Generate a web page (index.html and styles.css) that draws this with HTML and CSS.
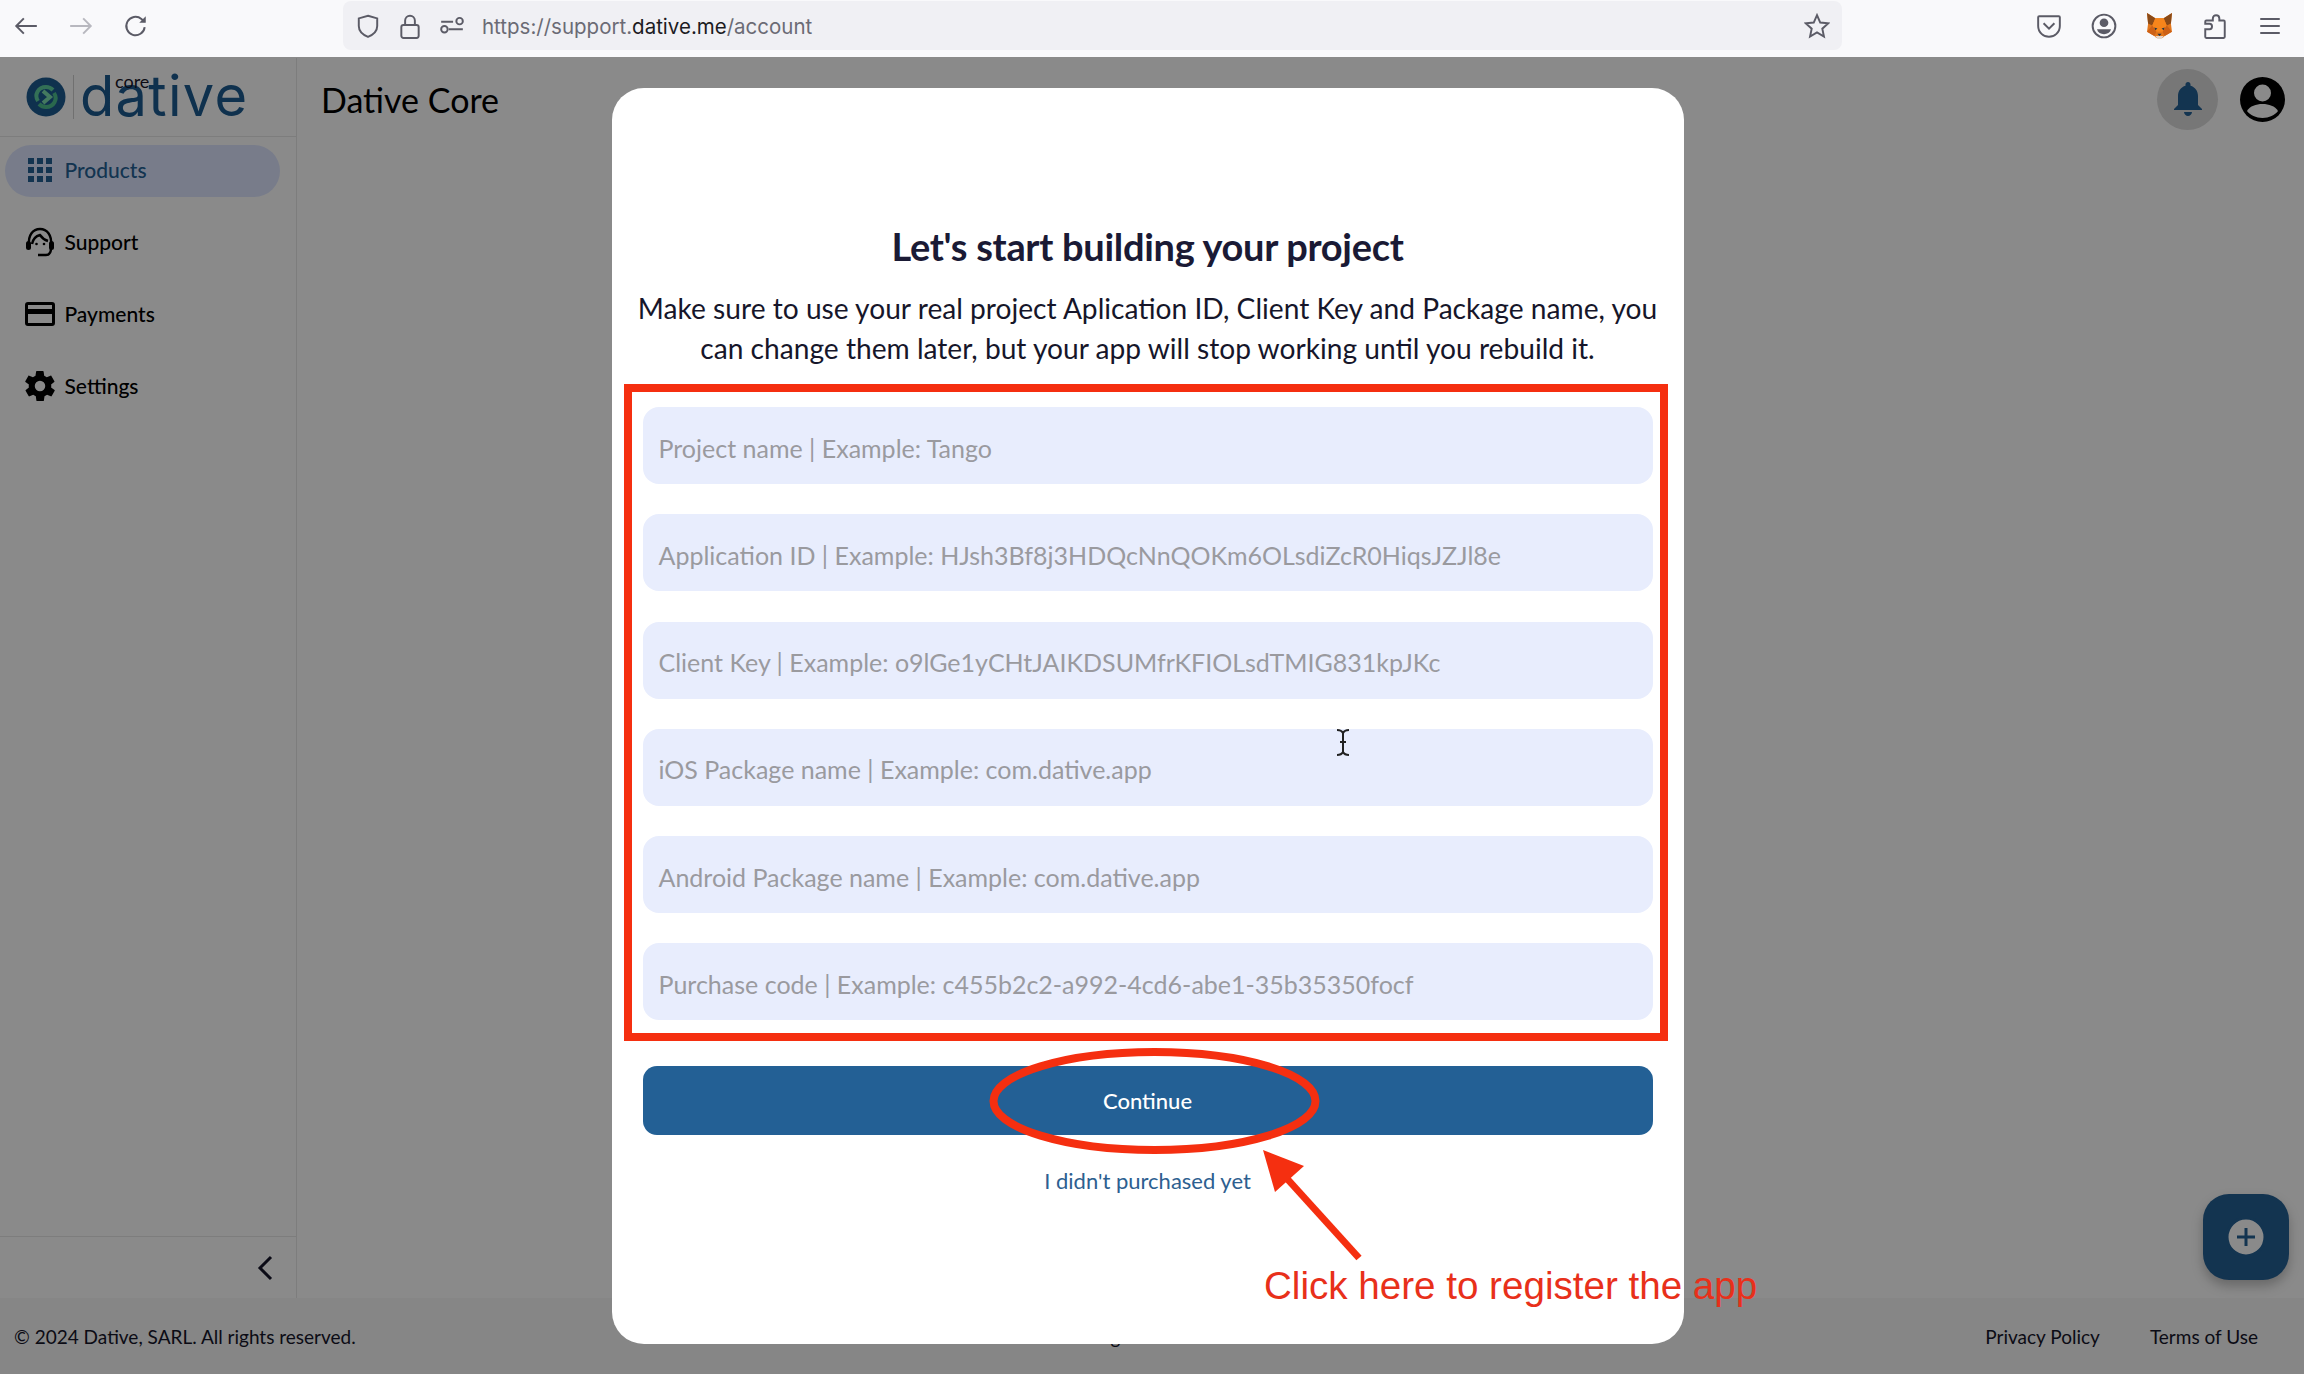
FILE: index.html
```html
<!DOCTYPE html>
<html lang="en">
<head>
  <meta charset="UTF-8" />
  <title>Dative Core</title>
  <link rel="stylesheet" href="styles.css">
</head>
<body>
  <div class="toolbar">
    <div class="tb-nav">
      <svg class="tb-icon" viewBox="0 0 24 24"><path d="M22 12H3M10 5l-7 7 7 7"/></svg>
      <svg class="tb-icon faded" viewBox="0 0 24 24"><path d="M2 12h19M14 5l7 7-7 7"/></svg>
      <svg class="tb-icon" viewBox="0 0 24 24"><path d="M20 13a8.5 8.5 0 1 1-3-7.5L20 8"/><path class="solid" d="M21 3v6h-6z"/></svg>
    </div>
    <div class="urlbar">
      <svg class="tb-icon" viewBox="0 0 24 24"><path d="M12 2.5l8.5 2.5v7c0 5-3.5 8-8.5 10-5-2-8.5-5-8.5-10V5z"/></svg>
      <svg class="tb-icon" viewBox="0 0 24 24"><rect x="4" y="11" width="16" height="12" rx="2"/><path d="M7.500 11V7a4.500 4.500 0 0 1 9 0v4"/></svg>
      <svg class="tb-icon" viewBox="0 0 24 24"><path d="M2 8h11M2 8M9 15h13"/><circle cx="19" cy="7.500" r="3"/><circle cx="5" cy="15" r="3"/></svg>
      <span class="url">https://support.<b>dative.me</b>/account</span>
      <svg class="tb-icon star" viewBox="0 0 24 24"><path d="M12 2l3 6.800 7.300.8-5.400 4.900 1.500 7.200-6.400-3.700-6.400 3.700 1.500-7.200L1.700 9.600 9 8.800z"/></svg>
    </div>
    <div class="tb-tools">
      <svg class="tb-icon" viewBox="0 0 24 24"><path d="M3 3h18a1 1 0 0 1 1 1v8c0 6-5 10-10 10S2 18 2 12V4a1 1 0 0 1 1-1z"/><path d="M7 9.500l5 5 5-5"/></svg>
      <svg class="tb-icon" viewBox="0 0 24 24"><circle cx="12" cy="12" r="10.500"/><circle class="solid" cx="12" cy="9" r="4"/><path class="solid" d="M5.500 15h13c-.800 3-3.500 4.500-6.500 4.500S6.300 18 5.500 15z"/></svg>
      <svg class="fox" viewBox="0 0 26 26">
        <path fill="#e2761b" d="M1 1l8 5h8l8-5-1 10 1 8-7 4-2 2h-6l-2-2-7-4 1-8z"/>
        <path fill="#8a4a17" d="M1 1l8 5-3 7-4-2zM25 1l-8 5 3 7 4-2z"/>
        <path fill="#f6851b" d="M6 13l3-7h8l3 7-4 6h-6z"/>
        <path fill="#cd6116" d="M1 19l5-6 4 6-2 4zM25 19l-5-6-4 6 2 4z"/>
        <path fill="#e4d5c8" d="M9 23h8l-2 3h-4z"/>
        <path fill="#233447" d="M11 21h4l-2 2zM8 15l3 1-2 1.500zM18 15l-3 1 2 1.500z"/>
      </svg>
      <svg class="tb-icon" viewBox="0 0 24 24"><path d="M4 23a1 1 0 0 1-1-1v-7h4c3 0 3-5 0-5H3V8a1 1 0 0 1 1-1h6V5c0-4 6-4 6 0v2h4a1 1 0 0 1 1 1v14a1 1 0 0 1-1 1z"/></svg>
      <svg class="tb-icon" viewBox="0 0 24 24"><path d="M3 5.500h18M3 12h18M3 18.500h18"/></svg>
    </div>
  </div>

  <div class="app">
    <div class="app-row">
      <aside class="sidebar">
        <div class="logo">
          <svg class="logo-mark" viewBox="0 0 40 40">
            <circle cx="20" cy="20" r="19.500" fill="#1d5c90"/>
            <path class="swirl-a" d="M12 24c-4-6 0-14 8-14 3 0 5 1 7 3"/>
            <path class="swirl-b" d="M28 16c4 6 0 14-8 14-3 0-5-1-7-3"/>
            <path class="swirl-c" d="M17 14l7 6-7 6"/>
          </svg>
          <div class="logo-word">
            <span class="logo-core">core</span>
            <span class="logo-name">dative</span>
          </div>
        </div>
        <nav class="nav">
          <a class="nav-item active">
            <svg class="nav-icon" viewBox="-2 -2 30 30"><path d="M1 1h6v6H1zM10 1h6v6h-6zM19 1h6v6h-6zM1 10h6v6H1zM10 10h6v6h-6zM19 10h6v6h-6zM1 19h6v6H1zM10 19h6v6h-6zM19 19h6v6h-6z"/></svg>
            Products
          </a>
          <a class="nav-item">
            <svg class="nav-icon outline" viewBox="0 0 30 30"><path d="M4 18C3 8 8 2 15 2s12 6 11 16"/><path d="M7 17c1-5 4-8 8-9 2 3 5 5 8 6"/><path d="M26 21c0 4-1 7-5 7h-8"/><rect class="fill" x="1" y="14" width="5" height="9" rx="2.500"/><rect class="fill" x="24" y="14" width="5" height="9" rx="2.500"/><circle class="fill" cx="11.500" cy="17" r="1.300"/><circle class="fill" cx="19" cy="17" r="1.300"/></svg>
            Support
          </a>
          <a class="nav-item">
            <svg class="nav-icon" viewBox="0 -3 30 30"><path d="M3 0h24a3 3 0 0 1 3 3v18a3 3 0 0 1-3 3H3a3 3 0 0 1-3-3V3a3 3 0 0 1 3-3zm0 3v4h24V3zm0 9v9h24v-9z"/></svg>
            Payments
          </a>
          <a class="nav-item">
            <svg class="nav-icon" viewBox="2 2 20 20"><path d="M19.400 13c.1-.3.1-.7.1-1s0-.7-.1-1l2.100-1.600c.2-.2.2-.4.1-.6l-2-3.500c-.1-.2-.4-.3-.6-.2l-2.500 1c-.5-.4-1.100-.7-1.700-1l-.4-2.700c0-.2-.2-.4-.5-.4h-4c-.3 0-.5.2-.5.400l-.4 2.700c-.6.300-1.200.6-1.700 1l-2.500-1c-.2-.1-.5 0-.6.200l-2 3.500c-.1.2-.1.400.1.600L4.600 11c-.1.300-.1.700-.1 1s0 .7.100 1l-2.100 1.600c-.2.200-.2.400-.1.600l2 3.500c.1.200.4.300.6.200l2.500-1c.5.400 1.100.7 1.700 1l.4 2.700c0 .2.2.4.5.4h4c.3 0 .5-.2.5-.4l.4-2.700c.6-.3 1.200-.6 1.700-1l2.500 1c.2.100.5 0 .6-.2l2-3.500c.1-.2.1-.4-.1-.6zM12 15.500a3.500 3.500 0 1 1 0-7 3.500 3.500 0 0 1 0 7z"/></svg>
            Settings
          </a>
        </nav>
        <div class="collapse">
          <svg class="chevron" viewBox="0 0 16 26"><path d="M14 2L3 13l11 11"/></svg>
        </div>
      </aside>

      <main class="content">
        <header class="topbar">
          <h1>Dative Core</h1>
          <div class="top-actions">
            <div class="bell-wrap">
              <svg class="bell" viewBox="0 0 30 36"><path d="M15 0c1.500 0 2.500 1 2.500 2.500v1.300C22 5 25 9 25 14v9l4 4v1H1v-1l4-4v-9C5 9 8 5 12.500 3.800V2.500C12.500 1 13.500 0 15 0zM11 30h8c0 2-2 4-4 4s-4-2-4-4z"/></svg>
            </div>
            <svg class="avatar" viewBox="0 0 45 45"><circle cx="22.500" cy="22.500" r="22.500" fill="#000"/><circle class="avatar-cut" cx="22.500" cy="16" r="8.500"/><path class="avatar-cut" d="M7 34c3-5 9-7 15.500-7S35 29 38 34c-3 4-9 7-15.500 7S10 38 7 34z"/></svg>
          </div>
        </header>
        <button class="fab">
          <svg viewBox="0 0 38 38"><circle cx="19" cy="19" r="19" fill="#fff"/><path d="M19 10v18M10 19h18"/></svg>
        </button>
      </main>
    </div>

    <footer class="footer">
      <span>&copy; 2024 Dative, SARL. All rights reserved.</span>
      <span class="footer-mid">g</span>
      <div class="footer-links">
        <a>Privacy Policy</a>
        <a>Terms of Use</a>
      </div>
    </footer>

    <div class="overlay">
      <div class="modal">
        <h2>Let's start building your project</h2>
        <p class="intro">Make sure to use your real project Aplication ID, Client Key and Package name, you<br>can change them later, but your app will stop working until you rebuild it.</p>
        <div class="fields">
          <div class="field">Project name | Example: Tango</div>
          <div class="field">Application ID | Example: HJsh3Bf8j3HDQcNnQOKm6OLsdiZcR0HiqsJZJl8e</div>
          <div class="field">Client Key | Example: o9lGe1yCHtJAIKDSUMfrKFIOLsdTMIG831kpJKc</div>
          <div class="field">iOS Package name | Example: com.dative.app</div>
          <div class="field">Android Package name | Example: com.dative.app</div>
          <div class="field">Purchase code | Example: c455b2c2-a992-4cd6-abe1-35b35350focf</div>
        </div>
        <button class="btn-continue">Continue</button>
        <a class="not-purchased">I didn't purchased yet</a>
      </div>
    </div>
  </div>

  <!-- red marks drawn on top of the screenshot -->
  <svg class="marks" viewBox="0 0 2304 1374">
    <rect class="mark-line" x="628" y="388" width="1036" height="649"/>
    <ellipse class="mark-line" cx="1154.500" cy="1101" rx="161" ry="49"/>
    <path class="mark-line thin" d="M1359 1258l-78-86"/>
    <path class="mark-fill" d="M1263 1150l41 16-29 26z"/>
    <text class="mark-text" x="1264" y="1299">Click here to register the app</text>
    <path class="cursor" d="M1337 730c3 0 5 1 6 3 1-2 3-3 6-3M1343 733v19M1337 755c3 0 5-1 6-3 1 2 3 3 6 3M1340 742h6"/>
  </svg>
</body>
</html>
```

FILE: styles.css
```css
* {
  box-sizing: border-box;
  margin: 0;
  padding: 0;
}

body {
  width: 2304px;
  height: 1374px;
  overflow: hidden;
  position: relative;
  background: #fff;
  font-family: 'Lato', sans-serif;
  color: #16162a;
}

/* browser bar */
.toolbar {
  height: 58px;
  display: flex;
  background: #f9f9fb;
  border-bottom: 1px solid #8a8a8a;
  padding: 1px 0 0 0;
}

.tb-icon {
  width: 26px;
  height: 26px;
  fill: none;
  stroke: #5b5b66;
  stroke-width: 1.8;
  flex-shrink: 0;
}

.tb-icon .solid {
  fill: #5b5b66;
  stroke: none;
}

.tb-icon.faded {
  stroke: #b8b8bf;
}

.tb-nav {
  width: 343px;
  display: flex;
  align-items: center;
  gap: 29px;
  padding: 0 0 7px 13px;
}

.urlbar {
  width: 1499px;
  height: 49px;
  background: #f0f0f4;
  border-radius: 8px;
  display: flex;
  align-items: center;
  gap: 16px;
  padding: 0 12px;
}

.url {
  font-family: 'Inter', sans-serif;
  font-size: 20.500px;
  color: #6b6b75;
  flex: 1;
  padding: 2px 0 0 1px;
}

.url b {
  font-weight: 400;
  color: #1c1b22;
}

.tb-tools {
  flex: 1;
  display: flex;
  align-items: center;
  gap: 29px;
  padding: 0 0 7px 194px;
}

.fox {
  width: 27px;
  height: 27px;
  flex-shrink: 0;
}

/* app under the modal */
.app {
  height: 1316px;
  position: relative;
  display: flex;
  flex-direction: column;
}

.app-row {
  flex: 1;
  display: flex;
}

.sidebar {
  width: 297px;
  border-right: 1px solid #e8e8e8;
  display: flex;
  flex-direction: column;
}

.logo {
  height: 79px;
  border-bottom: 1px solid #e8e8e8;
  display: flex;
  align-items: center;
  padding: 0 0 0 26px;
}

.logo-mark {
  width: 40px;
  height: 40px;
}

.swirl-a,
.swirl-b,
.swirl-c {
  fill: none;
  stroke-width: 4;
}

.swirl-a {
  stroke: #5fd0a0;
}

.swirl-b {
  stroke: #4fc08f;
}

.swirl-c {
  stroke: #7fe0b0;
}

.logo-word {
  position: relative;
  margin-left: 7px;
  padding-left: 6px;
  border-left: 1px solid #d0d0d0;
  height: 44px;
  display: flex;
  align-items: flex-end;
}

.logo-name {
  font-family: 'Inter', sans-serif;
  font-size: 56px;
  line-height: 46px;
  letter-spacing: 1.300px;
  color: #1d5c90;
}

.logo-core {
  position: absolute;
  left: 41px;
  top: -3px;
  font-size: 18px;
  line-height: 18px;
  color: #16162a;
}

.nav {
  flex: 1;
  display: flex;
  flex-direction: column;
  gap: 20px;
  padding: 8px 16px 0 5px;
}

.nav-item {
  height: 52px;
  border-radius: 26px;
  display: flex;
  align-items: center;
  gap: 10px;
  padding: 0 0 3px 19.500px;
  font-size: 21px;
  font-weight: 500;
  color: #000;
}

.nav-item.active {
  background: #dee6ff;
  color: #236095;
}

.nav-icon {
  width: 30px;
  height: 30px;
  fill: currentColor;
}

.nav-icon.outline {
  fill: none;
  stroke: currentColor;
  stroke-width: 2.400;
}

.nav-icon .fill {
  fill: currentColor;
  stroke: none;
}

.collapse {
  height: 62px;
  border-top: 1px solid #e8e8e8;
  display: flex;
  align-items: center;
  justify-content: flex-end;
  padding-right: 23px;
}

.chevron {
  width: 16px;
  height: 26px;
  fill: none;
  stroke: #16162a;
  stroke-width: 3;
}

.content {
  flex: 1;
  position: relative;
}

.topbar {
  display: flex;
  justify-content: space-between;
  align-items: center;
  padding: 11px 19px 0 24px;
}

.topbar h1 {
  font-size: 34px;
  font-weight: 400;
  color: #000;
}

.top-actions {
  display: flex;
  align-items: center;
  gap: 22px;
}

.bell-wrap {
  width: 61px;
  height: 61px;
  border-radius: 50%;
  background: #dcdcdc;
  display: flex;
  align-items: center;
  justify-content: center;
}

.bell {
  width: 30px;
  height: 36px;
  fill: #236095;
}

.avatar {
  width: 45px;
  height: 45px;
}

.avatar-cut {
  fill: #fff;
}

.fab {
  position: absolute;
  right: 15px;
  bottom: 18px;
  width: 86px;
  height: 86px;
  border: none;
  border-radius: 26px;
  background: #236095;
  box-shadow: 0 6px 12px rgba(0, 0, 0, 0.25);
  display: flex;
  align-items: center;
  justify-content: center;
}

.fab svg {
  width: 38px;
  height: 38px;
  stroke: #236095;
  stroke-width: 3;
}

.footer {
  height: 76px;
  background: #f7f7f7;
  display: flex;
  align-items: center;
  justify-content: space-between;
  padding: 1px 46px 0 14px;
  font-size: 19px;
}

.footer-mid {
  margin-right: 110px;
}

.footer-links {
  display: flex;
  gap: 50px;
}

/* modal */
.overlay {
  position: absolute;
  inset: 0;
  padding-right: 9px;
  background: rgba(0, 0, 0, 0.46);
  display: flex;
  align-items: center;
  justify-content: center;
}

.modal {
  width: 1072px;
  height: 1256px;
  background: #fff;
  border-radius: 32px;
  padding: 135px 31px 0;
  display: flex;
  flex-direction: column;
  align-items: center;
  text-align: center;
}

.modal h2 {
  font-size: 38px;
  line-height: 46px;
  font-weight: 700;
  letter-spacing: -0.300px;
  color: #1a1a35;
}

.intro {
  margin-top: 19px;
  font-size: 28.150px;
  line-height: 40px;
  color: #16162a;
  white-space: nowrap;
}

.fields {
  width: 100%;
  margin-top: 39px;
  display: flex;
  flex-direction: column;
  gap: 30.300px;
}

.field {
  height: 77px;
  background: #e8edfd;
  border-radius: 16px;
  display: flex;
  align-items: center;
  padding: 4px 16px 0;
  font-size: 25px;
  color: #9a9a9f;
}

.btn-continue {
  width: 100%;
  height: 69px;
  margin-top: 46px;
  border: none;
  border-radius: 14px;
  background: #236095;
  color: #fff;
  font-family: inherit;
  font-size: 22px;
  font-weight: 500;
}

.not-purchased {
  margin-top: 32px;
  font-size: 22px;
  line-height: 28px;
  color: #2d6090;
}

/* red marks */
.marks {
  position: absolute;
  top: 0;
  left: 0;
  width: 2304px;
  height: 1374px;
}

.mark-line {
  fill: none;
  stroke: #f52f10;
  stroke-width: 8;
}

.mark-line.thin {
  stroke-width: 7;
}

.mark-fill {
  fill: #f52f10;
}

.mark-text {
  font-family: 'Liberation Sans', sans-serif;
  font-size: 38.600px;
  fill: #e8301a;
}

.cursor {
  fill: none;
  stroke: #222;
  stroke-width: 2;
}
```
